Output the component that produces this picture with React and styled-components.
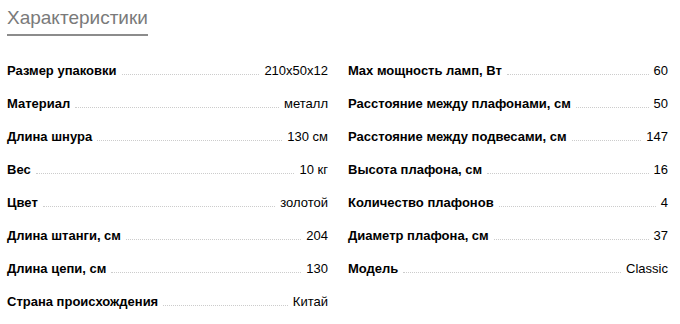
import React from "react";
import styled, { createGlobalStyle } from "styled-components";

const GlobalStyle = createGlobalStyle`
    body {
        margin: 0;
        background: #ffffff;
        font-family: "Liberation Sans", Arial, sans-serif;
    }
`;

const Container = styled.div`
    width: 680px;
    height: 324px;
    padding: 8px 12px 0 7px;
    box-sizing: border-box;
`;

const Title = styled.h2`
    display: inline-block;
    margin: 0;
    padding-bottom: 6px;
    font-size: 19px;
    font-weight: normal;
    line-height: 20px;
    color: #7a7a7a;
    border-bottom: 2px solid #8c8c8c;
`;

const Columns = styled.div`
    display: grid;
    grid-template-columns: 321px 320px;
    column-gap: 20px;
    margin-top: 27px;
`;

const Column = styled.div`
    display: flex;
    flex-direction: column;
`;

const Row = styled.div`
    display: flex;
    align-items: baseline;
    height: 33px;
    font-size: 13px;
    line-height: 16px;
    color: #000;
`;

const Label = styled.span`
    font-weight: bold;
    white-space: nowrap;
`;

const Leader = styled.span`
    flex: 1;
    margin: 0 5px;
    border-bottom: 1px dotted #cccccc;
`;

const Value = styled.span`
    white-space: nowrap;
`;

const left = [
    ["Размер упаковки", "210x50x12"],
    ["Материал", "металл"],
    ["Длина шнура", "130 см"],
    ["Вес", "10 кг"],
    ["Цвет", "золотой"],
    ["Длина штанги, см", "204"],
    ["Длина цепи, см", "130"],
    ["Страна происхождения", "Китай"],
];

const right = [
    ["Max мощность ламп, Вт", "60"],
    ["Расстояние между плафонами, см", "50"],
    ["Расстояние между подвесами, см", "147"],
    ["Высота плафона, см", "16"],
    ["Количество плафонов", "4"],
    ["Диаметр плафона, см", "37"],
    ["Модель", "Classic"],
];

const Spec = ({ label, value }) => (
    <Row>
        <Label>{label}</Label>
        <Leader />
        <Value>{value}</Value>
    </Row>
);

const App = () => {
    return (
        <Container>
            <GlobalStyle />
            <Title>Характеристики</Title>
            <Columns>
                <Column>
                    {left.map(([l, v]) => (
                        <Spec key={l} label={l} value={v} />
                    ))}
                </Column>
                <Column>
                    {right.map(([l, v]) => (
                        <Spec key={l} label={l} value={v} />
                    ))}
                </Column>
            </Columns>
        </Container>
    );
};

export default App;
